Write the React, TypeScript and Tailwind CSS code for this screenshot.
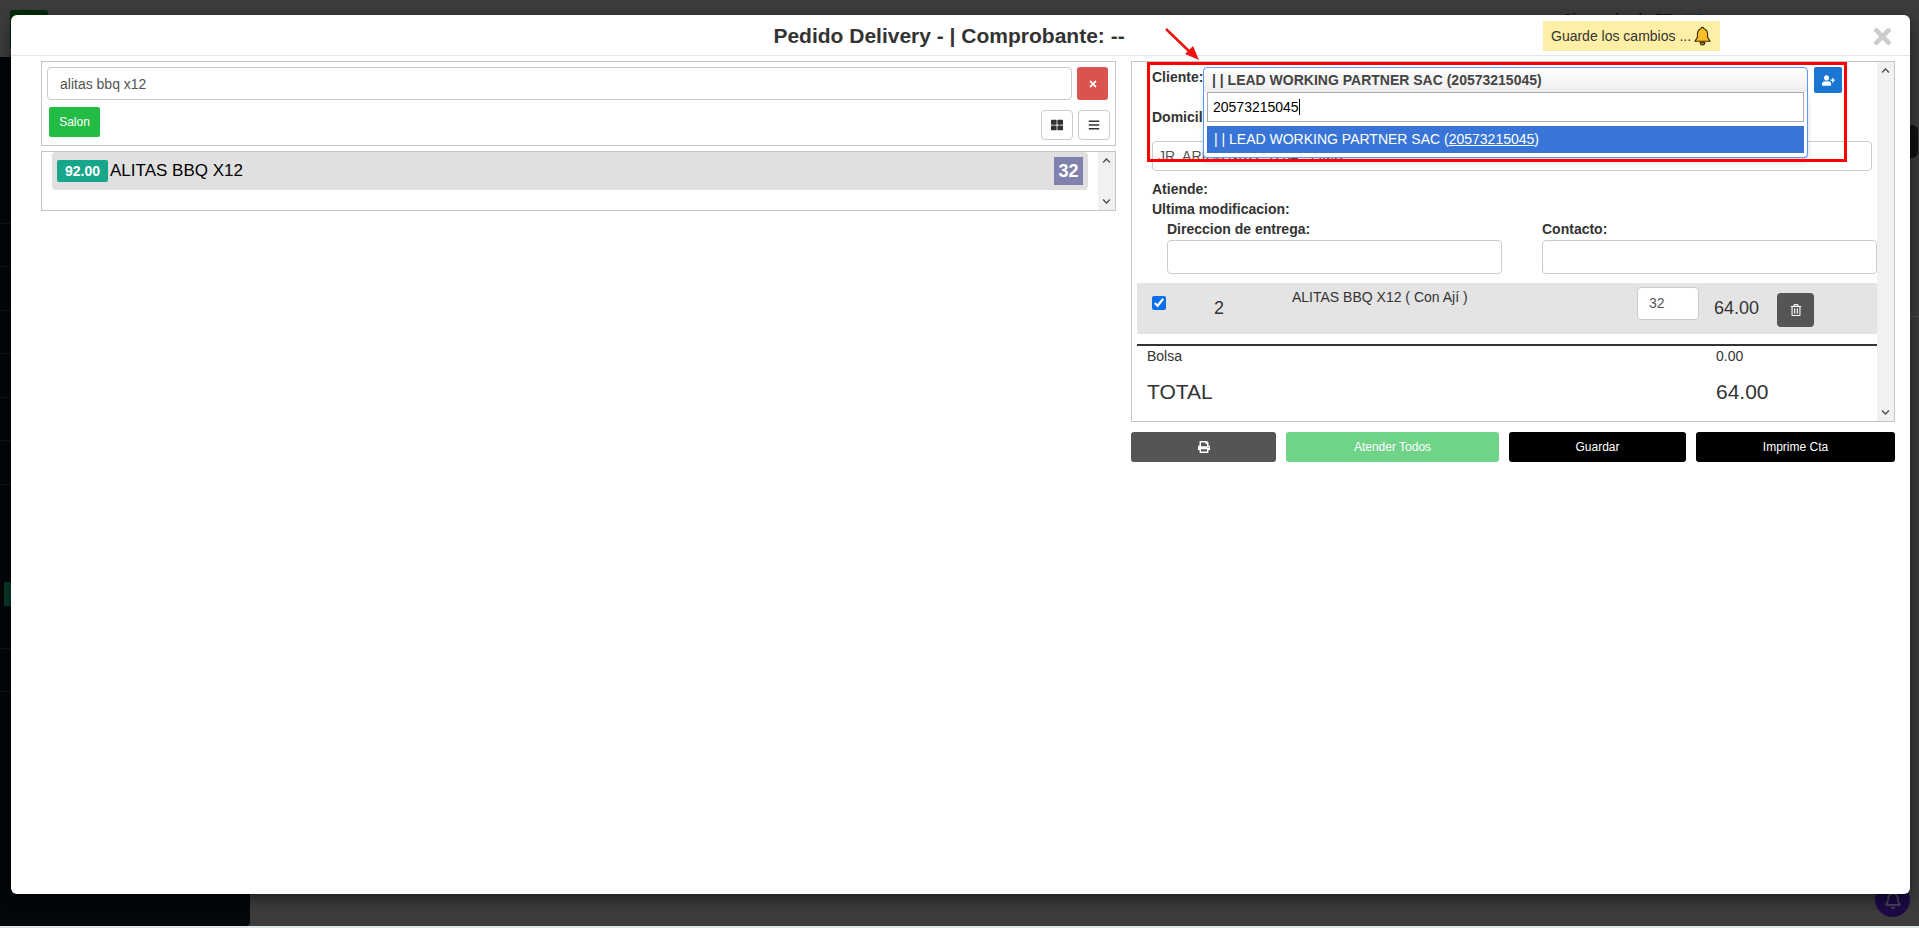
import React from "react";
import {
  FaBars,
  FaChevronDown,
  FaChevronUp,
  FaPrint,
  FaRegBell,
  FaRegTrashAlt,
  FaThLarge,
  FaTimes,
  FaUserPlus,
} from "react-icons/fa";

const Scrollbar = ({ className }: { className: string }) => (
  <div className={`flex flex-col justify-between items-center bg-[#f1f1f1] ${className}`}>
    <FaChevronUp size={9} className="mt-[4px] text-[#505050]" />
    <FaChevronDown size={9} className="mb-[4px] text-[#505050]" />
  </div>
);

const BellIcon = () => (
  <svg width="19" height="20" viewBox="0 0 17 18">
    <path
      d="M8.5 1.2c.8 0 1.3.5 1.3 1.2 2.3.6 3.3 2.4 3.3 5v2.800l2.300 3.500H1.600l2.300-3.500V7.400c0-2.600 1-4.400 3.300-5 0-.7.5-1.200 1.300-1.200z"
      fill="#fbbf24"
      stroke="#3b2a06"
      strokeWidth="1"
      strokeLinejoin="round"
    />
    <path d="M6.500 15a2 2 0 0 0 4 0z" fill="#fbbf24" stroke="#3b2a06" strokeWidth="1" />
  </svg>
);

const Backdrop = () => (
  <>
    <div className="absolute left-[10px] top-[10px] w-[38px] h-[40px] rounded-[3px] bg-[#052b0b]" />
    <div className="absolute left-[1563px] top-[9px] text-[14px] font-bold text-[#111]">
      Sincronizado FE : <span className="text-[#0b2a4a]">NO</span>
    </div>
    {/* sidebar, only its edge shows past the modal */}
    <div className="absolute left-0 top-[57px] w-[250px] h-[869px] bg-[#03070a] rounded-br-[4px] flex flex-col pt-[123px]">
      {[0, 1, 2, 3, 4, 5, 6].map((i) => (
        <div key={i} className="h-[43.500px] border-b border-[#0b1a24]" />
      ))}
      <div className="mt-[97px] ml-[4px] h-[24px] bg-[#0a3a2a]" />
      <div className="h-[43px] border-b border-[#0b1a24]" />
      <div className="h-[43px] border-b border-[#0b1a24]" />
    </div>
    <div className="absolute left-[1910px] top-[125px] w-[8px] h-[33px] rounded-r-[6px] bg-[#111]" />
    <div className="absolute left-[1910px] top-[316px] w-[9px] h-px bg-[#4a4a4a]" />
    <div className="absolute left-[1875px] top-[882px] w-[35px] h-[35px] rounded-full bg-[#1c0a45] flex items-center justify-center">
      <FaRegBell size={18} className="text-[#4d4560]" />
    </div>
    <div className="absolute left-0 right-0 bottom-0 h-[2px] bg-[#dfe6ea]" />
  </>
);

const App = () => {
  return (
    <div
      className="relative w-[1919px] h-[928px] overflow-hidden bg-[#3c3c3c] pt-[15px] pl-[11px] text-[#333]"
      style={{ fontFamily: '"Liberation Sans", Arial, sans-serif' }}
    >
      <Backdrop />

      <div className="relative w-[1899px] h-[879px] bg-white rounded-[6px] shadow-[0_5px_15px_rgba(0,0,0,0.5)]">
        {/* header */}
        <div className="relative h-[41px] border-b border-[#e5e5e5] flex items-center justify-center pr-[23px]">
          <h4 className="text-[21px] font-bold leading-none text-[#333]">
            Pedido Delivery - | Comprobante: --
          </h4>
          <div className="absolute left-[1532px] top-[6px] w-[177px] h-[30px] bg-[#fdf0a6] flex items-center pl-[8px] gap-[2px] text-[14px] text-[#333]">
            Guarde los cambios ... <BellIcon />
          </div>
          <FaTimes size={25} className="absolute left-[1859px] top-[9px] text-[#cccccc]" />
        </div>

        {/* arrow over header */}
        <svg className="absolute left-[1150px] top-[10px]" width="45" height="40" viewBox="0 0 45 40">
          <path d="M5 4 L31 29" stroke="#ee1111" strokeWidth="2.500" />
          <path d="M38 35 L24 29 L32 21 Z" fill="#ee1111" />
        </svg>

        <div className="flex items-start gap-[15px] pl-[30px] pt-[5px]">
          {/* left column */}
          <div className="w-[1075px] shrink-0">
            <div className="h-[85px] border border-[#c4c4c4] px-[5px] pt-[5px]">
              <div className="flex gap-[5px]">
                <input
                  readOnly
                  value="alitas bbq x12"
                  className="w-[1025px] h-[33px] border border-[#ccc] rounded-[4px] px-[12px] text-[14px] text-[#555] outline-none"
                />
                <button className="w-[31px] h-[33px] rounded-[3px] bg-[#d9534f] flex items-center justify-center text-white">
                  <FaTimes size={10} />
                </button>
              </div>
              <div className="flex items-start mt-[7px] ml-[2px]">
                <button className="w-[51px] h-[30px] rounded-[2px] bg-[#22bb44] text-white text-[12px]">
                  Salon
                </button>
                <button className="ml-[941px] mt-[3px] w-[32px] h-[30px] border border-[#ccc] rounded-[4px] flex items-center justify-center text-[#333]">
                  <FaThLarge size={12} />
                </button>
                <button className="ml-[5px] mt-[3px] w-[32px] h-[30px] border border-[#ccc] rounded-[4px] flex items-center justify-center text-[#333]">
                  <FaBars size={12} />
                </button>
              </div>
            </div>

            <div className="mt-[5px] h-[60px] border border-[#c4c4c4] flex">
              <div className="w-[1056px] pl-[10px]">
                <div className="w-[1036px] h-[38px] bg-[#e0e0e0] rounded-[4px] flex items-center pl-[5px] pr-[5px] text-[17px] text-black">
                  <span className="w-[51px] h-[22px] rounded-[2px] bg-[#17a689] text-white text-[14px] font-bold flex items-center justify-center mr-[2px]">
                    92.00
                  </span>
                  ALITAS BBQ X12
                  <span className="ml-auto w-[29px] h-[28px] bg-[#8181ad] text-white text-[18px] font-bold flex items-center justify-center">
                    32
                  </span>
                </div>
              </div>
              <Scrollbar className="w-[17px]" />
            </div>
          </div>

          {/* right column */}
          <div className="w-[764px] shrink-0">
            <div className="relative h-[361px] border border-[#c4c4c4] flex overflow-hidden">
              <div className="w-[745px] shrink-0">
                <div className="flex items-start pl-[20px] pt-[5px]">
                  <span className="w-[51px] text-[14px] font-bold leading-[20px]">Cliente:</span>
                  <div className="relative w-[605px] h-[26px] border border-[#5897fb] rounded-t-[4px] bg-gradient-to-b from-white to-[#eee] px-[8px] text-[14px] font-bold leading-[24px] text-[#444]">
                    | | LEAD WORKING PARTNER SAC (20573215045)
                    <div className="absolute z-10 left-[-1px] top-[24px] w-[605px] h-[66px] border border-[#5897fb] border-t-0 rounded-b-[4px] bg-white px-[3px] shadow-[0_4px_5px_rgba(0,0,0,0.15)]">
                      <div className="h-[30px] border border-[#aaa] bg-white px-[5px] text-[14px] font-normal leading-[28px] text-black flex items-center">
                        20573215045
                        <span className="w-px h-[16px] bg-black" />
                      </div>
                      <div className="mt-[4px] h-[27px] bg-[#3875d7] pl-[7px] text-[14px] font-normal leading-[27px] text-white">
                        | | LEAD WORKING PARTNER SAC (<span className="underline">20573215045</span>)
                      </div>
                    </div>
                  </div>
                  <button className="ml-[6px] w-[28px] h-[26px] rounded-[2px] bg-[#1976d2] flex items-center justify-center text-white">
                    <FaUserPlus size={13} />
                  </button>
                </div>

                <div className="pl-[20px] mt-[14px] text-[14px] font-bold leading-[20px]">Domicilio:</div>
                <div className="ml-[20px] mt-[14px] w-[720px] h-[30px] border border-[#ccc] rounded-[4px] px-[5px] text-[14px] leading-[28px] text-[#555]">
                  JR. ARICA NRO. 1234 - LIMA
                </div>

                <div className="pl-[20px] mt-[8px] text-[14px] font-bold leading-[20px]">Atiende:</div>
                <div className="pl-[20px] text-[14px] font-bold leading-[20px]">Ultima modificacion:</div>

                <div className="flex pl-[35px] gap-[40px]">
                  <div className="w-[335px]">
                    <div className="text-[14px] font-bold leading-[20px]">Direccion de entrega:</div>
                    <input readOnly className="block w-full h-[34px] border border-[#ccc] rounded-[4px] mt-px outline-none" />
                  </div>
                  <div className="w-[335px]">
                    <div className="text-[14px] font-bold leading-[20px]">Contacto:</div>
                    <input readOnly className="block w-full h-[34px] border border-[#ccc] rounded-[4px] mt-px outline-none" />
                  </div>
                </div>

                {/* order line */}
                <div className="ml-[5px] mt-[9px] w-[740px] h-[51px] bg-[#e4e4e4] flex items-start">
                  <input
                    readOnly
                    type="checkbox"
                    checked
                    className="ml-[15px] mt-[13px] w-[14px] h-[14px] accent-[#0b6fe8]"
                  />
                  <span className="ml-[48px] mt-[15px] w-[78px] text-[18px] leading-[20px]">2</span>
                  <span className="mt-[6px] w-[345px] text-[14px] leading-[16px]">ALITAS BBQ X12 ( Con Ají )</span>
                  <div className="mt-[4px] w-[62px] h-[33px] rounded-[4px] border border-[#ccc] bg-white pl-[11px] text-[14px] leading-[31px] text-[#555]">
                    32
                  </div>
                  <span className="ml-[15px] mt-[15px] w-[63px] text-[18px] leading-[20px]">64.00</span>
                  <button className="mt-[10px] w-[37px] h-[34px] rounded-[4px] bg-[#555] flex items-center justify-center text-white">
                    <FaRegTrashAlt size={12} />
                  </button>
                </div>

                <div className="ml-[5px] mt-[10px] w-[740px] border-t-[2px] border-[#333]" />
                <div className="flex pl-[15px] mt-[2px] text-[14px] leading-[16px]">
                  <span className="w-[569px]">Bolsa</span>
                  <span>0.00</span>
                </div>
                <div className="flex pl-[15px] mt-[15px] text-[21px] leading-[26px]">
                  <span className="w-[569px]">TOTAL</span>
                  <span>64.00</span>
                </div>
              </div>
              <Scrollbar className="w-[17px]" />

              {/* red annotation frame */}
              <div className="absolute z-20 left-[15px] top-0 w-[700px] h-[100px] border-[3px] border-[#f00] pointer-events-none" />
            </div>

            <div className="flex gap-[10px] mt-[10px] text-[12px] text-white">
              <button className="w-[145px] h-[30px] rounded-[3px] bg-[#555] flex items-center justify-center">
                <FaPrint size={12} />
              </button>
              <button className="w-[213px] h-[30px] rounded-[3px] bg-[#6fd388]">Atender Todos</button>
              <button className="w-[177px] h-[30px] rounded-[3px] bg-black">Guardar</button>
              <button className="w-[199px] h-[30px] rounded-[3px] bg-black">Imprime Cta</button>
            </div>
          </div>
        </div>
      </div>
    </div>
  );
};

export default App;
